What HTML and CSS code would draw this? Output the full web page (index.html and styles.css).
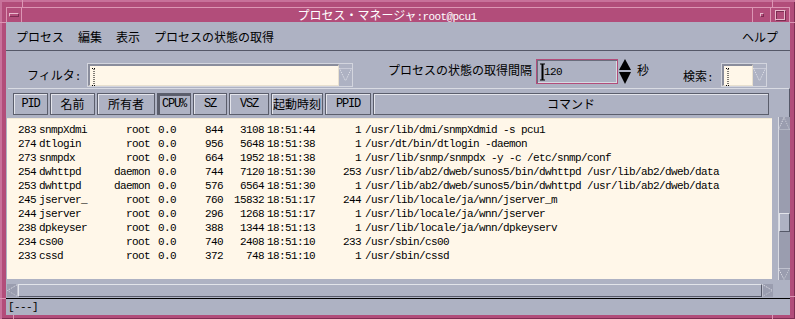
FILE: index.html
```html
<!DOCTYPE html>
<html lang="ja">
<head>
<meta charset="utf-8">
<title>プロセス・マネージャ</title>
<link rel="stylesheet" href="styles.css">
</head>
<body>
<div class="frame">
  <span class="mark mark-tl-v"></span><span class="mark mark-tl-h"></span>
  <span class="mark mark-tr-v"></span><span class="mark mark-tr-h"></span>
  <span class="mark mark-bl-v"></span><span class="mark mark-bl-h"></span>
  <span class="mark mark-br-v"></span><span class="mark mark-br-h"></span>
  <div class="titlebar">
    <div class="tb-menu"><span class="tb-bar"></span></div>
    <div class="tb-title">プロセス・マネージャ<span class="lat">:root@pcu1</span></div>
    <div class="tb-min"><span class="tb-dot"></span></div>
    <div class="tb-max"><span class="tb-sq"></span></div>
  </div>
  <div class="client">
    <div class="menubar">
      <span class="mi">プロセス</span>
      <span class="mi">編集</span>
      <span class="mi">表示</span>
      <span class="mi">プロセスの状態の取得</span>
      <span class="mi help">ヘルプ</span>
    </div>
    <div class="toolbar">
      <span class="lbl lbl-filter">フィルタ<span class="lat">:</span></span>
      <div class="combo combo-filter">
        <div class="field">
          <svg class="ibeam" width="5" height="18" viewBox="0 0 5 18"><path d="M0 0.5H4M2 1V17M0 17.5H4" stroke="#000" stroke-width="1" stroke-dasharray="1 1" fill="none"/></svg>
        </div>
        <div class="arrow">
          <svg width="13" height="14" viewBox="0 0 13 14"><path d="M0.5 0.5H12.5M0.5 0.5L6.5 13M12.5 0.5L6.5 13" stroke="#e4e5ec" stroke-dasharray="1 1" fill="none"/></svg>
        </div>
      </div>
      <span class="lbl lbl-interval">プロセスの状態の取得間隔</span>
      <div class="spin-field">
        <svg class="ibeam-solid" width="6" height="18" viewBox="0 0 6 18"><path d="M0 1H5M0 17H5" stroke="#000" stroke-width="1.2" fill="none"/><path d="M2.5 1V17" stroke="#000" stroke-width="2" fill="none"/></svg>
        <span class="spin-val">120</span>
      </div>
      <svg class="spin-arrows" width="12" height="25" viewBox="0 0 12 25"><polygon points="6,0 12,11 0,11" fill="#000"/><polygon points="0,13 12,13 6,25" fill="#000"/></svg>
      <span class="lbl lbl-sec">秒</span>
      <span class="lbl lbl-search">検索<span class="lat">:</span></span>
      <div class="combo combo-search">
        <div class="field">
          <svg class="ibeam" width="5" height="18" viewBox="0 0 5 18"><path d="M0 0.5H4M2 1V17M0 17.5H4" stroke="#000" stroke-width="1" stroke-dasharray="1 1" fill="none"/></svg>
        </div>
        <div class="arrow">
          <svg width="13" height="14" viewBox="0 0 13 14"><path d="M0.5 0.5H12.5M0.5 0.5L6.5 13M12.5 0.5L6.5 13" stroke="#e4e5ec" stroke-dasharray="1 1" fill="none"/></svg>
        </div>
      </div>
    </div>
    <div class="headerbox">
      <div class="hbtn w-pid lat">PID</div>
      <div class="hbtn w-name">名前</div>
      <div class="hbtn w-own">所有者</div>
      <div class="hbtn w-cpu lat sorted">CPU%</div>
      <div class="hbtn w-sz lat">SZ</div>
      <div class="hbtn w-vsz lat">VSZ</div>
      <div class="hbtn w-time">起動時刻</div>
      <div class="hbtn w-ppid lat">PPID</div>
      <div class="hbtn w-cmd">コマンド</div>
    </div>
    <div class="listbody">
      <div class="table">
        <div class="row"><span class="r">283</span><span class="nm">snmpXdmi</span><span class="r">root</span><span class="cpu">0.0</span><span class="r">844</span><span class="r">3108</span><span class="tm">18:51:44</span><span class="r">1</span><span class="cmd">/usr/lib/dmi/snmpXdmid -s pcu1</span></div>
        <div class="row"><span class="r">274</span><span class="nm">dtlogin</span><span class="r">root</span><span class="cpu">0.0</span><span class="r">956</span><span class="r">5648</span><span class="tm">18:51:38</span><span class="r">1</span><span class="cmd">/usr/dt/bin/dtlogin -daemon</span></div>
        <div class="row"><span class="r">273</span><span class="nm">snmpdx</span><span class="r">root</span><span class="cpu">0.0</span><span class="r">664</span><span class="r">1952</span><span class="tm">18:51:38</span><span class="r">1</span><span class="cmd">/usr/lib/snmp/snmpdx -y -c /etc/snmp/conf</span></div>
        <div class="row"><span class="r">254</span><span class="nm">dwhttpd</span><span class="r">daemon</span><span class="cpu">0.0</span><span class="r">744</span><span class="r">7120</span><span class="tm">18:51:30</span><span class="r">253</span><span class="cmd">/usr/lib/ab2/dweb/sunos5/bin/dwhttpd /usr/lib/ab2/dweb/data</span></div>
        <div class="row"><span class="r">253</span><span class="nm">dwhttpd</span><span class="r">daemon</span><span class="cpu">0.0</span><span class="r">576</span><span class="r">6564</span><span class="tm">18:51:30</span><span class="r">1</span><span class="cmd">/usr/lib/ab2/dweb/sunos5/bin/dwhttpd /usr/lib/ab2/dweb/data</span></div>
        <div class="row"><span class="r">245</span><span class="nm">jserver_</span><span class="r">root</span><span class="cpu">0.0</span><span class="r">760</span><span class="r">15832</span><span class="tm">18:51:17</span><span class="r">244</span><span class="cmd">/usr/lib/locale/ja/wnn/jserver_m</span></div>
        <div class="row"><span class="r">244</span><span class="nm">jserver</span><span class="r">root</span><span class="cpu">0.0</span><span class="r">296</span><span class="r">1268</span><span class="tm">18:51:17</span><span class="r">1</span><span class="cmd">/usr/lib/locale/ja/wnn/jserver</span></div>
        <div class="row"><span class="r">238</span><span class="nm">dpkeyser</span><span class="r">root</span><span class="cpu">0.0</span><span class="r">388</span><span class="r">1344</span><span class="tm">18:51:13</span><span class="r">1</span><span class="cmd">/usr/lib/locale/ja/wnn/dpkeyserv</span></div>
        <div class="row"><span class="r">234</span><span class="nm">cs00</span><span class="r">root</span><span class="cpu">0.0</span><span class="r">740</span><span class="r">2408</span><span class="tm">18:51:10</span><span class="r">233</span><span class="cmd">/usr/sbin/cs00</span></div>
        <div class="row"><span class="r">233</span><span class="nm">cssd</span><span class="r">root</span><span class="cpu">0.0</span><span class="r">372</span><span class="r">748</span><span class="tm">18:51:10</span><span class="r">1</span><span class="cmd">/usr/sbin/cssd</span></div>
      </div>
      <div class="vscroll">
        <svg class="vs-arrow" width="12" height="13" viewBox="0 0 12 13"><path d="M6 0.5L0.5 12.5" stroke="#e4e5ec" stroke-dasharray="1 1" fill="none"/><path d="M6 0.5L11.5 12.5M0.5 12.5H11.5" stroke="#c9cbd5" stroke-dasharray="1 1" fill="none"/></svg>
        <div class="vs-track"><div class="vs-thumb"></div></div>
        <svg class="vs-arrow" width="12" height="12" viewBox="0 0 12 12"><path d="M0.5 0.5H11.5M0.5 0.5L6 11.5" stroke="#e4e5ec" stroke-dasharray="1 1" fill="none"/><path d="M11.5 0.5L6 11.5" stroke="#c9cbd5" stroke-dasharray="1 1" fill="none"/></svg>
      </div>
    </div>
    <div class="hscroll">
      <svg class="hs-arrow" width="11" height="13" viewBox="0 0 11 13"><path d="M0.5 6.5L10.5 0.5M10.5 0.5V12.5" stroke="#e4e5ec" stroke-dasharray="1 1" fill="none"/><path d="M0.5 6.5L10.5 12.5" stroke="#c9cbd5" stroke-dasharray="1 1" fill="none"/></svg>
      <div class="hs-thumb"></div>
      <svg class="hs-arrow" width="11" height="13" viewBox="0 0 11 13"><path d="M0.5 0.5L10.5 6.5M0.5 0.5V12.5" stroke="#e4e5ec" stroke-dasharray="1 1" fill="none"/><path d="M0.5 12.5L10.5 6.5" stroke="#c9cbd5" stroke-dasharray="1 1" fill="none"/></svg>
    </div>
    <div class="status">[---]</div>
  </div>
</div>
</body>
</html>
```
FILE: styles.css
```css
* { box-sizing: border-box; }
html, body { margin: 0; padding: 0; }
body {
  width: 795px;
  height: 319px;
  overflow: hidden;
  background: #b24d7a;
  font-family: "Noto Sans CJK JP", "Liberation Sans", sans-serif;
  font-size: 12px;
  color: #000;
}
.lat {
  font-family: "Liberation Mono", monospace;
  font-size: 11px;
  letter-spacing: -0.6px;
}

/* window frame */
.frame {
  position: relative;
  width: 795px;
  height: 319px;
  padding: 7px 5px 4px 6px;
  display: flex;
  flex-direction: column;
  background: #b24d7a;
  box-shadow: inset 2px 2px 0 #c8719a, inset -1px -1px 0 #7c2d52;
}
.mark { position: absolute; background: #dc96b4; }
.mark-tl-v { left: 22px; top: 0; width: 1px; height: 7px; }
.mark-tl-h { left: 0; top: 22px; width: 6px; height: 1px; }
.mark-tr-v { left: 772px; top: 0; width: 1px; height: 7px; }
.mark-tr-h { left: 790px; top: 22px; width: 5px; height: 1px; }
.mark-bl-v { left: 13px; top: 315px; width: 1px; height: 4px; }
.mark-bl-h { left: 0; top: 298px; width: 6px; height: 1px; }
.mark-br-v { left: 772px; top: 315px; width: 1px; height: 4px; }
.mark-br-h { left: 790px; top: 296px; width: 5px; height: 1px; }

.titlebar {
  height: 15px;
  display: flex;
  border-top: 1px solid #dc96b4;
}
.tb-menu {
  width: 16px;
  border-left: 1px solid #dc96b4;
  border-right: 1px solid #dc96b4;
  display: flex;
  align-items: center;
  justify-content: center;
}
.tb-bar {
  width: 10px;
  height: 4px;
  border: 1px solid #e9b9cd;
  border-right-color: #7c2d52;
  border-bottom-color: #7c2d52;
}
.tb-title {
  flex: 1;
  text-align: center;
  color: #fff;
  line-height: 14px;
  white-space: nowrap;
}
.tb-title .lat { font-size: 11px; }
.tb-min {
  width: 18px;
  border-left: 1px solid #dc96b4;
  display: flex;
  align-items: center;
  justify-content: center;
}
.tb-dot {
  width: 4px;
  height: 4px;
  border: 1px solid #e9b9cd;
  border-right-color: #7c2d52;
  border-bottom-color: #7c2d52;
}
.tb-max {
  width: 20px;
  border-left: 1px solid #dc96b4;
  border-right: 1px solid #dc96b4;
  display: flex;
  align-items: center;
  justify-content: center;
}
.tb-sq {
  width: 11px;
  height: 11px;
  border: 1px solid #e9b9cd;
  border-right-color: #7c2d52;
  border-bottom-color: #7c2d52;
  box-shadow: inset -1px -1px 0 #e9b9cd, inset 1px 1px 0 #7c2d52;
}

/* client area */
.client {
  flex: 1;
  background: #aeb2c3;
  display: flex;
  flex-direction: column;
}
.menubar {
  height: 29px;
  border-bottom: 1px solid #555868;
  display: flex;
  padding: 1px 5px 0 3px;
  line-height: 28px;
  white-space: nowrap;
}
.mi { padding: 0 7px; }
.mi.help { margin-left: auto; }

.toolbar {
  height: 37px;
  display: flex;
  align-items: flex-start;
  padding-left: 21px;
  white-space: nowrap;
}
.lbl { line-height: 14px; }
.lbl-filter { width: 60px; margin-top: 17px; }
.lbl-interval { width: 148px; margin-left: 35px; margin-top: 12px; }
.lbl-sec { width: 46px; margin-left: 6px; margin-top: 12px; }
.lbl-search { width: 38px; margin-top: 18px; }

.combo {
  display: flex;
  height: 24px;
  margin-top: 12px;
  border: 1px solid #d3d5de;
}
.combo .field {
  background: #fff7e9;
  border-top: 2px solid #8a8d9c;
  border-left: 2px solid #8a8d9c;
  border-right: 1px solid #e8e0cf;
  border-bottom: 1px solid #e8e0cf;
  padding: 2px 0 0 2px;
}
.combo-filter .field { width: 251px; }
.combo-search .field { width: 31px; }
.combo .arrow {
  width: 13px;
  padding-top: 4px;
  display: flex;
  justify-content: center;
}
.ibeam, .ibeam-solid { display: block; }

.spin-field {
  width: 82px;
  height: 25px;
  margin-top: 8px;
  border: 1px solid #b24d7a;
  box-shadow: inset 1px 1px 0 #6a6d7c, inset -1px -1px 0 #d8dae2;
  display: flex;
  align-items: center;
  padding-left: 3px;
}
.spin-val {
  font-family: "Liberation Mono", monospace;
  font-size: 11px;
  letter-spacing: -0.6px;
  margin-left: -2px;
  line-height: 14px;
}
.spin-arrows { display: block; margin-left: 1px; margin-top: 8px; }

/* header buttons */
.headerbox {
  height: 29px;
  margin-left: 2px;
  border-top: 1px solid #d9dbe3;
  border-right: 1px solid #555868;
  padding: 4px 0 0 5px;
  display: flex;
  gap: 2px;
}
.hbtn {
  height: 22px;
  border: 1px solid #5b5e6c;
  box-shadow: inset 1px 1px 0 #e4e5ec;
  display: flex;
  align-items: center;
  justify-content: center;
  line-height: 14px;
  white-space: nowrap;
}
.hbtn.lat { font-size: 12px; letter-spacing: -1.2px; }
.hbtn.sorted { box-shadow: inset 2px 2px 0 #5b5e6c; }
.w-pid { width: 35px; }
.w-name { width: 45px; }
.w-own { width: 58px; }
.w-cpu { width: 34px; }
.w-sz { width: 34px; }
.w-vsz { width: 40px; }
.w-time { width: 52px; }
.w-ppid { width: 46px; }
.w-cmd { width: 396px; }

/* list */
.listbody {
  height: 163px;
  display: flex;
}
.table {
  width: 765px;
  margin: 1px 0 1px 1px;
  background: #fff7e9;
  border-top: 1px solid #f3ead6;
  padding-top: 4px;
  font-family: "Liberation Mono", monospace;
  font-size: 11px;
  letter-spacing: -0.6px;
  overflow: hidden;
}
.row {
  display: grid;
  grid-template-columns: 29px 74px 40px 40px 33px 41px 54px 43px 1fr;
  height: 14px;
  line-height: 14px;
  white-space: nowrap;
}
.row .r { text-align: right; }
.row .nm { padding-left: 3px; }
.row .cpu { padding-left: 8px; }
.row .tm { padding-left: 3px; }
.row .cmd { padding-left: 4px; }

.vscroll {
  width: 12px;
  margin-left: 6px;
  display: flex;
  flex-direction: column;
  background: #9a9daf;
  border-left: 1px solid #d9dbe3;
}
.vs-arrow { display: block; margin-left: -1px; }
.vs-track { flex: 1; }
.vs-thumb {
  margin-top: 83px;
  height: 19px;
  background: #aeb2c3;
  border-top: 1px solid #e2e4ea;
  border-left: 1px solid #e2e4ea;
  border-right: 1px solid #555868;
  border-bottom: 1px solid #555868;
}

.hscroll {
  width: 766px;
  height: 13px;
  margin: 4px 0 0 1px;
  display: flex;
  background: #9a9daf;
}
.hs-arrow { display: block; }
.hs-thumb {
  flex: 1;
  background: #aeb2c3;
  border-top: 1px solid #e2e4ea;
  border-left: 1px solid #e2e4ea;
  border-right: 1px solid #555868;
  border-bottom: 1px solid #555868;
}

.status {
  flex: 1;
  margin-top: 1px;
  border-top: 1px solid #000;
  padding-left: 2px;
  font-family: "Liberation Mono", monospace;
  font-size: 11px;
  letter-spacing: -0.6px;
  line-height: 16px;
}
```
